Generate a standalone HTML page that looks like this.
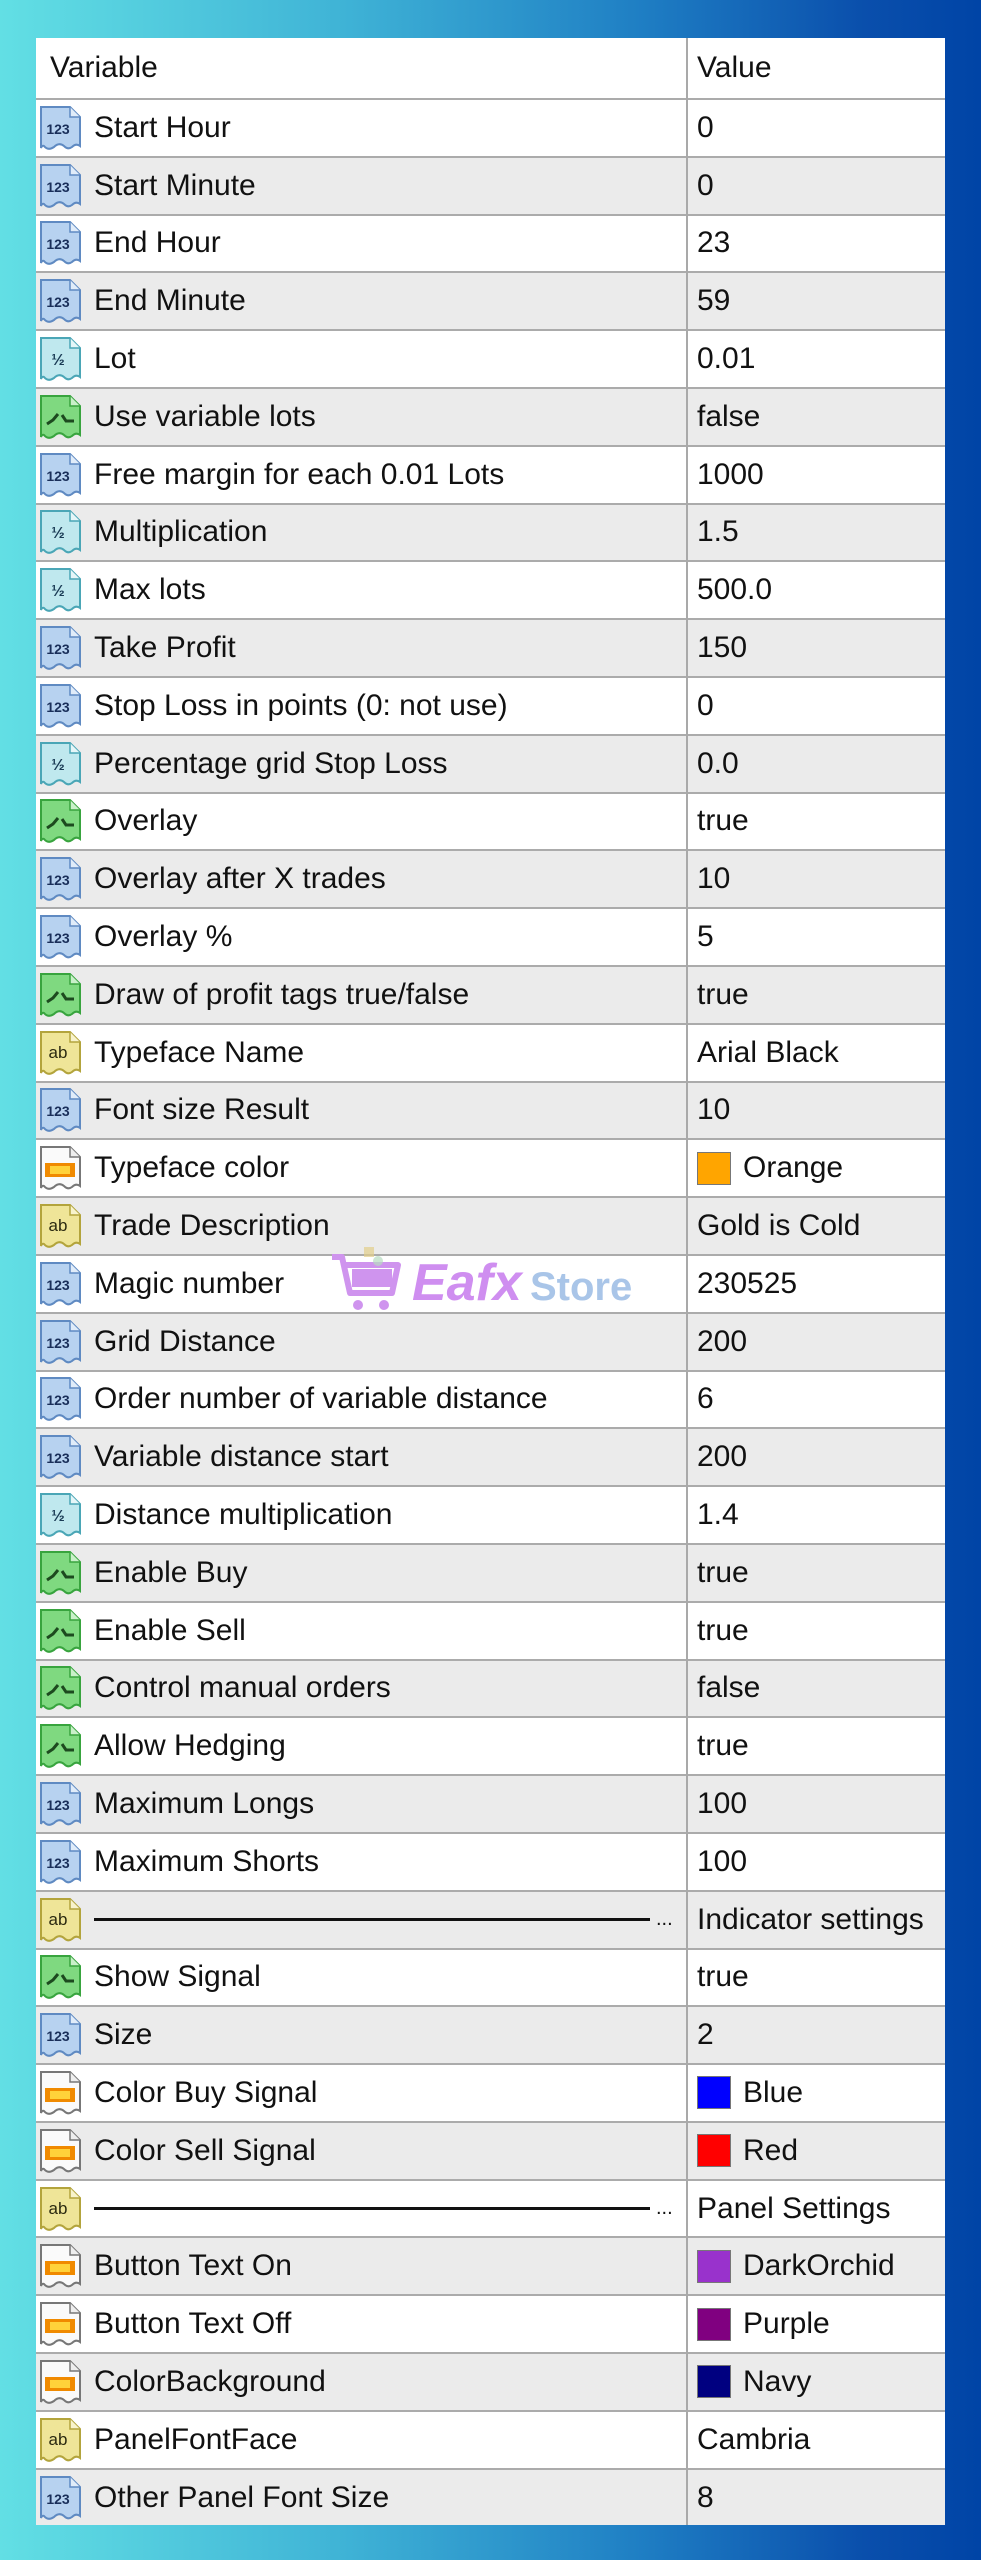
<!DOCTYPE html>
<html><head><meta charset="utf-8">
<style>
html,body{margin:0;padding:0}
body{width:981px;height:2560px;position:relative;overflow:hidden;
background:linear-gradient(90deg,#62dfe4 0%,#3fb3d6 35%,#1f7fc4 65%,#0a4fac 88%,#0044a6 100%);
font-family:"Liberation Sans",sans-serif;}
.tbl{position:absolute;left:36px;top:38px;width:909px;background:#fff}
.row{position:relative;box-sizing:border-box;border-top:2px solid #ababab;display:flex;align-items:center;font-size:30px;color:#111;height:57.8px}
.row.g{background:#ebebeb}
.hd{height:60px;border-top:none}
.n{position:absolute;left:58px;top:0;bottom:0;display:flex;align-items:center;white-space:nowrap}
.v{position:absolute;left:661px;top:0;bottom:0;display:flex;align-items:center;white-space:nowrap}
.hd .n{left:14px}
.row svg.ic{position:absolute;left:2px;top:50%;margin-top:-24px;width:46px;height:48px}
.div{position:absolute;left:650px;top:0;width:2px;height:100%;background:#a9a9a9;z-index:2}
.sw{display:inline-block;width:34px;height:33px;border:1px solid #777;margin-right:12px;box-sizing:border-box}
.line{display:inline-block;width:556px;height:3px;background:#111;vertical-align:middle;margin-right:6px}
.wm{position:absolute;left:330px;top:1245px;width:330px;height:70px;z-index:3}
</style></head><body>
<svg width="0" height="0" style="position:absolute">
<defs>
<path id="doc" d="M3 3 H32 L42 13 V42 Q38 39 34 43 Q30 46 26 42 Q21 38 16 43 Q10 47 6 42 Q4 41 3 44 Z"/>
</defs>
<symbol id="num" viewBox="0 0 46 48"><use href="#doc" fill="#b7d2f0" stroke="#5f8ac2" stroke-width="2"/><path d="M32 3 V13 H42" fill="#e0ecf9" stroke="#5f8ac2" stroke-width="1.5"/><text x="20" y="30" font-size="14" font-weight="bold" font-family="Liberation Sans" fill="#1a2f5a" text-anchor="middle">123</text></symbol>
<symbol id="half" viewBox="0 0 46 48"><use href="#doc" fill="#bfe8ee" stroke="#4aa6b6" stroke-width="2"/><path d="M32 3 V13 H42" fill="#e5f6f8" stroke="#4aa6b6" stroke-width="1.5"/><text x="20" y="30" font-size="16" font-weight="bold" font-family="Liberation Sans" fill="#1a3b55" text-anchor="middle">½</text></symbol>
<symbol id="bool" viewBox="0 0 46 48"><use href="#doc" fill="#7fd980" stroke="#38a43e" stroke-width="2"/><path d="M32 3 V13 H42" fill="#c9f0c9" stroke="#38a43e" stroke-width="1.5"/><path d="M9 31 L15 27 L20 21 M24 22 L28 28 L36 28" fill="none" stroke="#1d4a1f" stroke-width="3"/></symbol>
<symbol id="ab" viewBox="0 0 46 48"><use href="#doc" fill="#efe598" stroke="#b3a43c" stroke-width="2"/><path d="M32 3 V13 H42" fill="#f8f3cc" stroke="#b3a43c" stroke-width="1.5"/><text x="20" y="29" font-size="17" font-family="Liberation Sans" fill="#2b2a10" text-anchor="middle">ab</text></symbol>
<symbol id="col" viewBox="0 0 46 48"><use href="#doc" fill="#fafafa" stroke="#777" stroke-width="2"/><path d="M32 3 V13 H42" fill="#eee" stroke="#777" stroke-width="1.5"/><rect x="7" y="19" width="30" height="14" fill="#f08a00"/><rect x="12" y="22" width="20" height="8" fill="#ffd23a"/></symbol>
</svg>
<div class="tbl">
<div class="div"></div>
<div class="row hd"><span class="n">Variable</span><span class="v">Value</span></div>
<div class="row"><svg class="ic"><use href="#num"/></svg><span class="n">Start Hour</span><span class="v">0</span></div>
<div class="row g"><svg class="ic"><use href="#num"/></svg><span class="n">Start Minute</span><span class="v">0</span></div>
<div class="row"><svg class="ic"><use href="#num"/></svg><span class="n">End Hour</span><span class="v">23</span></div>
<div class="row g"><svg class="ic"><use href="#num"/></svg><span class="n">End Minute</span><span class="v">59</span></div>
<div class="row"><svg class="ic"><use href="#half"/></svg><span class="n">Lot</span><span class="v">0.01</span></div>
<div class="row g"><svg class="ic"><use href="#bool"/></svg><span class="n">Use variable lots</span><span class="v">false</span></div>
<div class="row"><svg class="ic"><use href="#num"/></svg><span class="n">Free margin for each 0.01 Lots</span><span class="v">1000</span></div>
<div class="row g"><svg class="ic"><use href="#half"/></svg><span class="n">Multiplication</span><span class="v">1.5</span></div>
<div class="row"><svg class="ic"><use href="#half"/></svg><span class="n">Max lots</span><span class="v">500.0</span></div>
<div class="row g"><svg class="ic"><use href="#num"/></svg><span class="n">Take Profit</span><span class="v">150</span></div>
<div class="row"><svg class="ic"><use href="#num"/></svg><span class="n">Stop Loss in points (0: not use)</span><span class="v">0</span></div>
<div class="row g"><svg class="ic"><use href="#half"/></svg><span class="n">Percentage grid Stop Loss</span><span class="v">0.0</span></div>
<div class="row"><svg class="ic"><use href="#bool"/></svg><span class="n">Overlay</span><span class="v">true</span></div>
<div class="row g"><svg class="ic"><use href="#num"/></svg><span class="n">Overlay after X trades</span><span class="v">10</span></div>
<div class="row"><svg class="ic"><use href="#num"/></svg><span class="n">Overlay %</span><span class="v">5</span></div>
<div class="row g"><svg class="ic"><use href="#bool"/></svg><span class="n">Draw of profit tags true/false</span><span class="v">true</span></div>
<div class="row"><svg class="ic"><use href="#ab"/></svg><span class="n">Typeface Name</span><span class="v">Arial Black</span></div>
<div class="row g"><svg class="ic"><use href="#num"/></svg><span class="n">Font size Result</span><span class="v">10</span></div>
<div class="row"><svg class="ic"><use href="#col"/></svg><span class="n">Typeface color</span><span class="v"><span class="sw" style="background:#ffa500"></span>Orange</span></div>
<div class="row g"><svg class="ic"><use href="#ab"/></svg><span class="n">Trade Description</span><span class="v">Gold is Cold</span></div>
<div class="row"><svg class="ic"><use href="#num"/></svg><span class="n">Magic number</span><span class="v">230525</span></div>
<div class="row g"><svg class="ic"><use href="#num"/></svg><span class="n">Grid Distance</span><span class="v">200</span></div>
<div class="row"><svg class="ic"><use href="#num"/></svg><span class="n">Order number of variable distance</span><span class="v">6</span></div>
<div class="row g"><svg class="ic"><use href="#num"/></svg><span class="n">Variable distance start</span><span class="v">200</span></div>
<div class="row"><svg class="ic"><use href="#half"/></svg><span class="n">Distance multiplication</span><span class="v">1.4</span></div>
<div class="row g"><svg class="ic"><use href="#bool"/></svg><span class="n">Enable Buy</span><span class="v">true</span></div>
<div class="row"><svg class="ic"><use href="#bool"/></svg><span class="n">Enable Sell</span><span class="v">true</span></div>
<div class="row g"><svg class="ic"><use href="#bool"/></svg><span class="n">Control manual orders</span><span class="v">false</span></div>
<div class="row"><svg class="ic"><use href="#bool"/></svg><span class="n">Allow Hedging</span><span class="v">true</span></div>
<div class="row g"><svg class="ic"><use href="#num"/></svg><span class="n">Maximum Longs</span><span class="v">100</span></div>
<div class="row"><svg class="ic"><use href="#num"/></svg><span class="n">Maximum Shorts</span><span class="v">100</span></div>
<div class="row g"><svg class="ic"><use href="#ab"/></svg><span class="n"><span class="line"></span><span style="font-size:20px">...</span></span><span class="v">Indicator settings</span></div>
<div class="row"><svg class="ic"><use href="#bool"/></svg><span class="n">Show Signal</span><span class="v">true</span></div>
<div class="row g"><svg class="ic"><use href="#num"/></svg><span class="n">Size</span><span class="v">2</span></div>
<div class="row"><svg class="ic"><use href="#col"/></svg><span class="n">Color Buy Signal</span><span class="v"><span class="sw" style="background:#0000ff"></span>Blue</span></div>
<div class="row g"><svg class="ic"><use href="#col"/></svg><span class="n">Color Sell Signal</span><span class="v"><span class="sw" style="background:#ff0000"></span>Red</span></div>
<div class="row"><svg class="ic"><use href="#ab"/></svg><span class="n"><span class="line"></span><span style="font-size:20px">...</span></span><span class="v">Panel Settings</span></div>
<div class="row g"><svg class="ic"><use href="#col"/></svg><span class="n">Button Text On</span><span class="v"><span class="sw" style="background:#9932cc"></span>DarkOrchid</span></div>
<div class="row"><svg class="ic"><use href="#col"/></svg><span class="n">Button Text Off</span><span class="v"><span class="sw" style="background:#800080"></span>Purple</span></div>
<div class="row g"><svg class="ic"><use href="#col"/></svg><span class="n">ColorBackground</span><span class="v"><span class="sw" style="background:#000080"></span>Navy</span></div>
<div class="row"><svg class="ic"><use href="#ab"/></svg><span class="n">PanelFontFace</span><span class="v">Cambria</span></div>
<div class="row g"><svg class="ic"><use href="#num"/></svg><span class="n">Other Panel Font Size</span><span class="v">8</span></div>
</div>
<svg class="wm" viewBox="0 0 330 70">
<path d="M2 12 L12 12 L20 48 H62 L68 20 H16" fill="none" stroke="#cf94ee" stroke-width="6" stroke-linejoin="round"/>
<rect x="22" y="24" width="40" height="18" fill="#cf94ee"/>
<circle cx="28" cy="60" r="5" fill="#cf94ee"/><circle cx="54" cy="60" r="5" fill="#cf94ee"/>
<rect x="34" y="2" width="10" height="10" fill="#e3cf8a" opacity=".7"/><circle cx="48" cy="16" r="5" fill="#b7dcc0" opacity=".7"/>
<text x="82" y="55" font-family="Liberation Sans" font-weight="bold" font-style="italic" font-size="52" fill="#cf8ef0">Eafx</text>
<text x="200" y="55" font-family="Liberation Sans" font-weight="bold" font-size="40" fill="#a9c5e8">Store</text>
</svg>
</body></html>
